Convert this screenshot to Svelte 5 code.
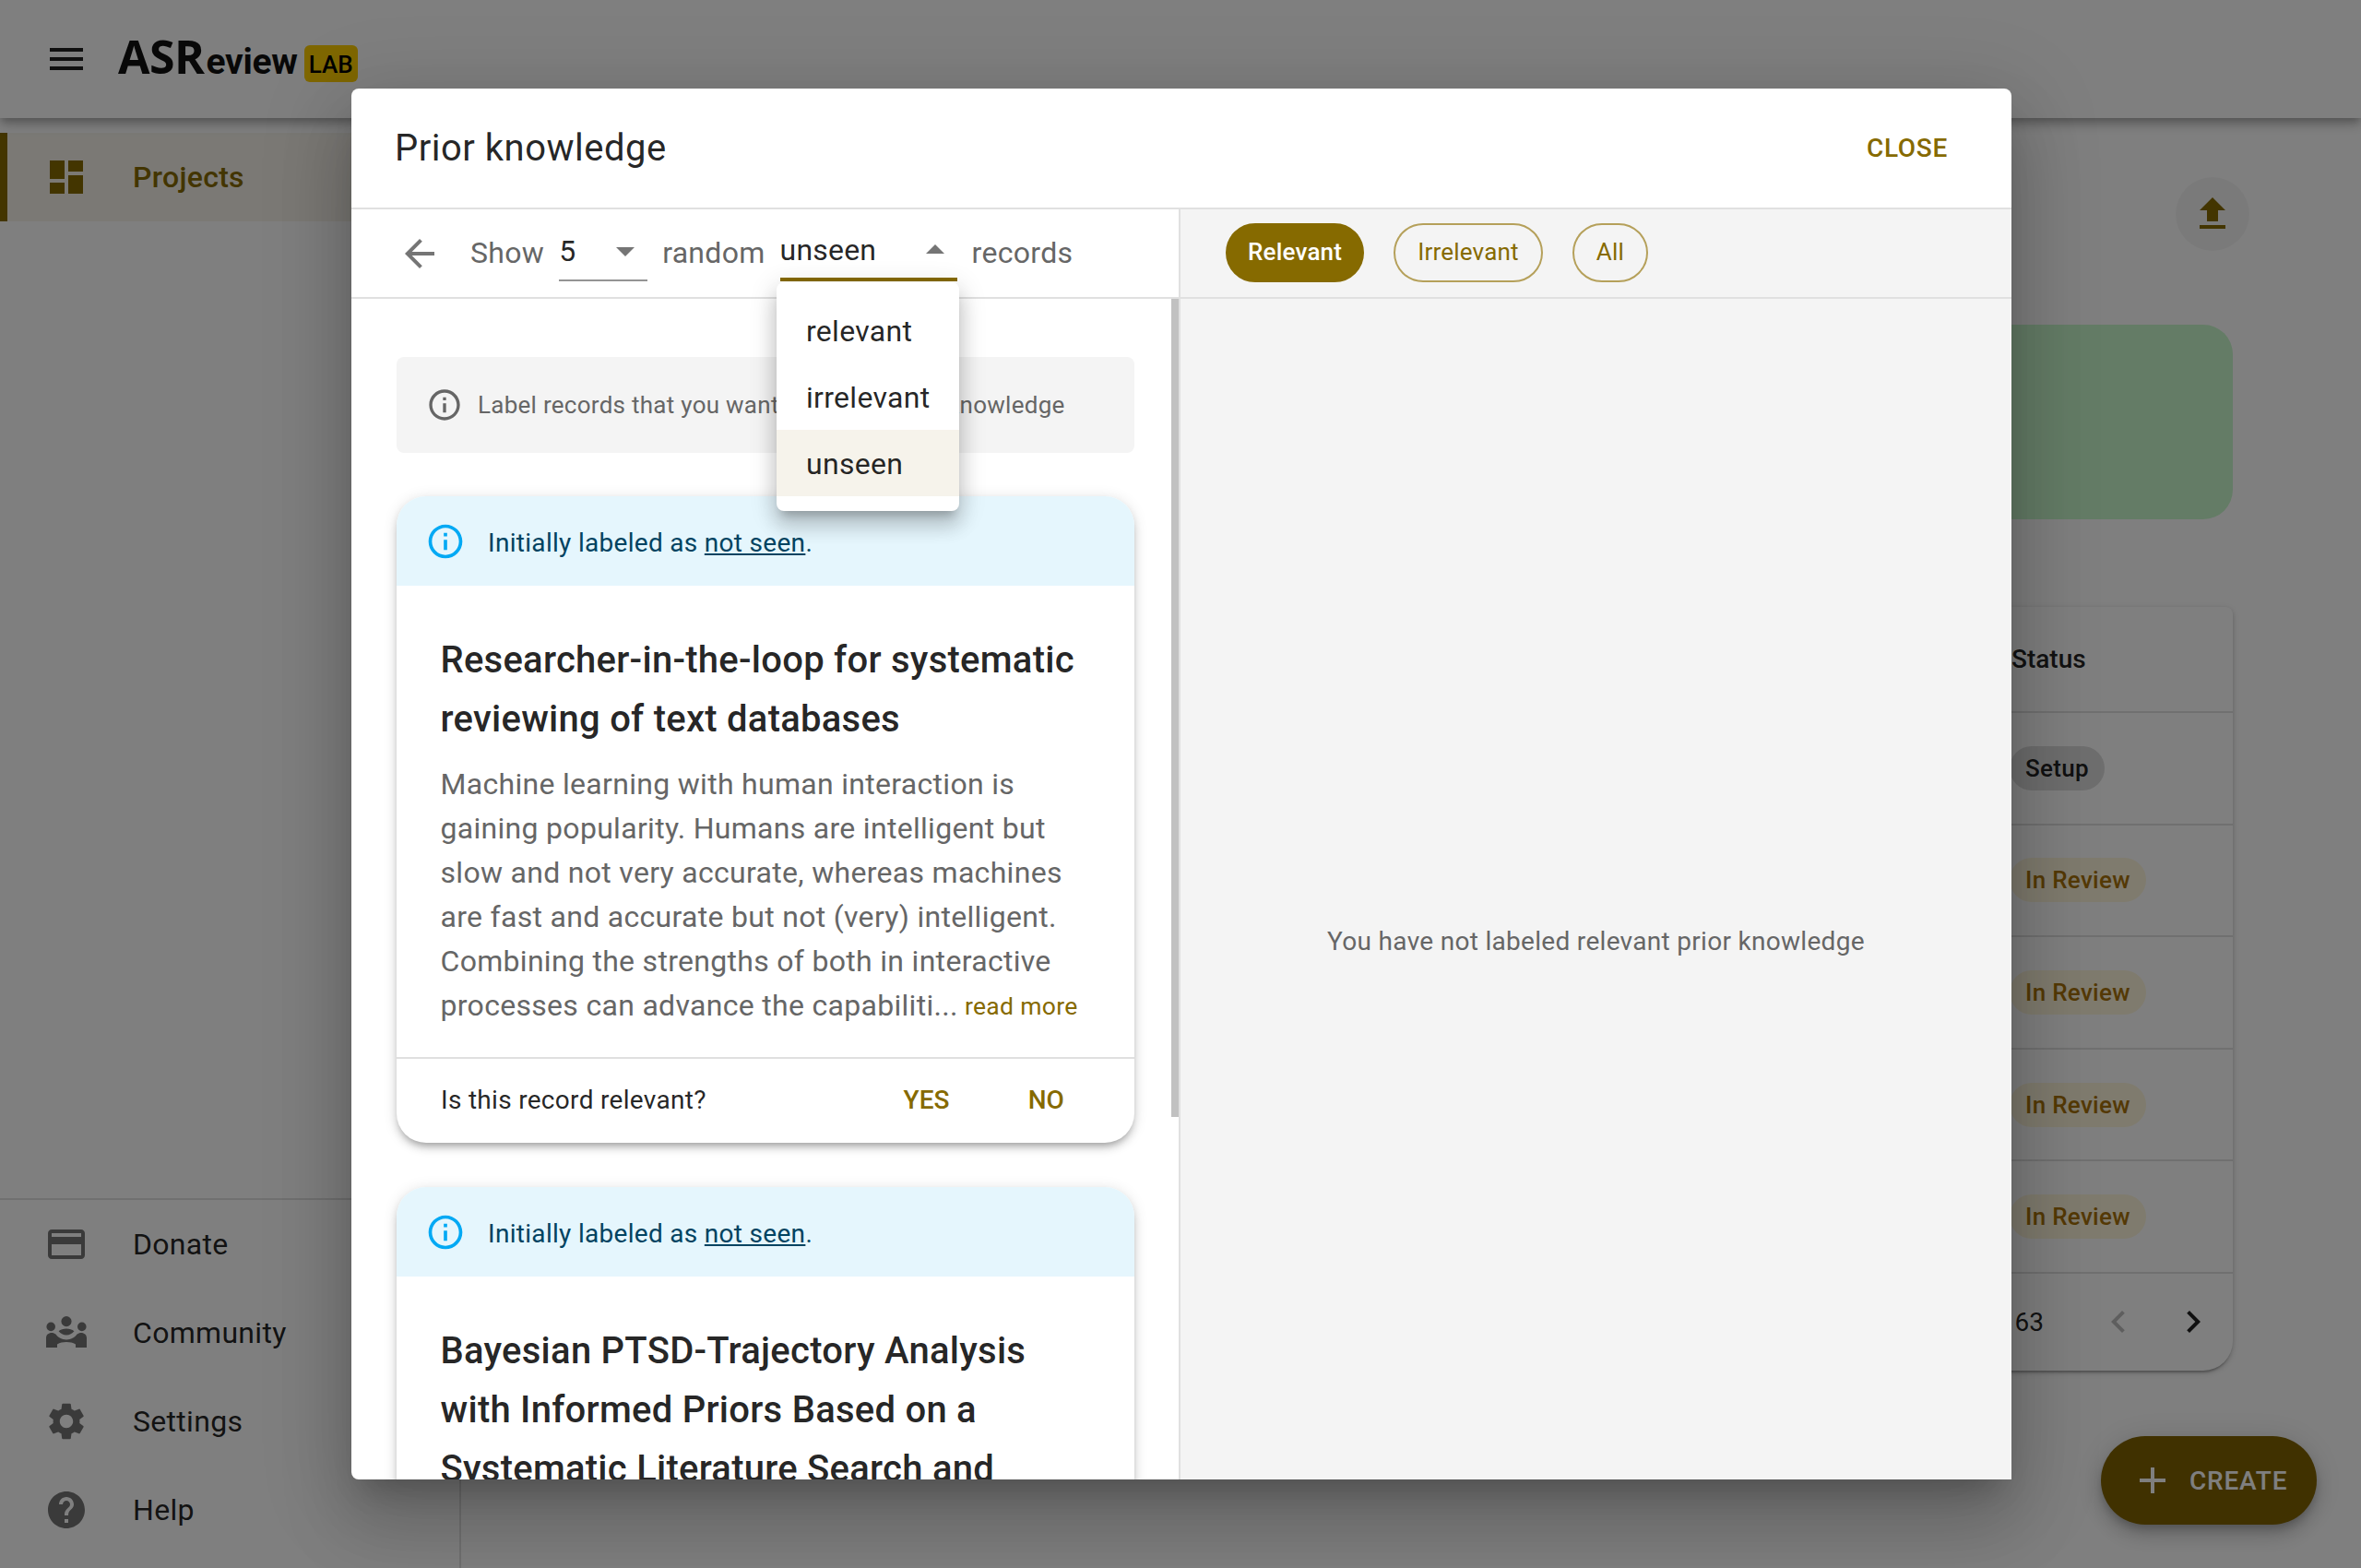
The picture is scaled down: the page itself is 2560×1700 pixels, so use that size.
<script>
  const P = {
    menu: 'M3 18h18v-2H3v2zm0-5h18v-2H3v2zm0-7v2h18V6H3z',
    dash: 'M3 13h8V3H3v10zm0 8h8v-6H3v6zm10 0h8V11h-8v10zm0-18v6h8V3h-8z',
    card: 'M20 4H4c-1.11 0-1.99.89-1.99 2L2 18c0 1.11.89 2 2 2h16c1.11 0 2-.89 2-2V6c0-1.11-.89-2-2-2zm0 14H4v-6h16v6zm0-10H4V6h16v2z',
    community: 'M3.6 6.300a2.400 2.400 0 1 1 0 4.800 2.400 2.400 0 0 1 0-4.800zm16.800 0a2.400 2.400 0 1 1 0 4.800 2.400 2.400 0 0 1 0-4.800zM12 3a2.800 2.800 0 1 1 0 5.600A2.800 2.800 0 0 1 12 3zM1 20v-5.200c0-1.700 1.300-2.800 3-2.800.9 0 1.600.3 2.200.8 1.300 1.800 3.400 2.900 5.800 2.900s4.500-1.100 5.800-2.900c.6-.5 1.300-.8 2.200-.8 1.700 0 3 1.100 3 2.800V20h-6v-1.800c-1.500-.8-3.100-1.200-5-1.200s-3.500.4-5 1.200V20zM7.800 11.100c1-.9 2.600-1.400 4.200-1.400s3.200.5 4.200 1.400c-1 1.300-2.500 2.100-4.200 2.100s-3.200-.8-4.200-2.100z',
    gear: 'M19.14 12.94c.04-.3.06-.61.06-.94 0-.32-.02-.64-.07-.94l2.03-1.58c.18-.14.23-.41.12-.61l-1.92-3.32c-.12-.22-.37-.29-.59-.22l-2.39.96c-.5-.38-1.03-.7-1.62-.94l-.36-2.54c-.04-.24-.24-.41-.48-.41h-3.84c-.24 0-.43.17-.47.41l-.36 2.54c-.59.24-1.13.57-1.62.94l-2.39-.96c-.22-.08-.47 0-.59.22L2.74 8.87c-.12.21-.08.47.12.61l2.03 1.58c-.05.3-.09.63-.09.94s.02.64.07.94l-2.03 1.58c-.18.14-.23.41-.12.61l1.92 3.32c.12.22.37.29.59.22l2.39-.96c.5.38 1.03.7 1.62.94l.36 2.54c.05.24.24.41.48.41h3.84c.24 0 .44-.17.47-.41l.36-2.54c.59-.24 1.13-.56 1.62-.94l2.39.96c.22.08.47 0 .59-.22l1.92-3.32c.12-.22.07-.47-.12-.61l-2.01-1.58zM12 15.6c-1.98 0-3.6-1.62-3.6-3.6s1.62-3.6 3.6-3.6 3.6 1.62 3.6 3.6-1.62 3.6-3.6 3.6z',
    help: 'M12 2C6.48 2 2 6.48 2 12s4.48 10 10 10 10-4.48 10-10S17.52 2 12 2zm1 17h-2v-2h2v2zm2.07-7.75l-.9.92C13.45 12.9 13 13.5 13 15h-2v-.5c0-1.1.45-2.1 1.17-2.83l1.24-1.26c.37-.36.59-.86.59-1.41 0-1.1-.9-2-2-2s-2 .9-2 2H8c0-2.21 1.79-4 4-4s4 1.79 4 4c0 .88-.36 1.68-.93 2.25z',
    upload: 'M9 16h6v-6h4l-7-7-7 7h4zm-4 2h14v2H5z',
    back: 'M20 11H7.83l5.59-5.59L12 4l-8 8 8 8 1.41-1.41L7.83 13H20v-2z',
    info: 'M11 7h2v2h-2zm0 4h2v6h-2zm1-9C6.48 2 2 6.48 2 12s4.48 10 10 10 10-4.48 10-10S17.52 2 12 2zm0 18c-4.41 0-8-3.59-8-8s3.59-8 8-8 8 3.59 8 8-3.59 8-8 8z',
    add: 'M19 13h-6v6h-2v-6H5v-2h6V5h2v6h6v2z',
    left: 'M15.41 7.41 14 6l-6 6 6 6 1.41-1.41L10.83 12z',
    right: 'M10 6 8.59 7.41 13.17 12l-4.58 4.59L10 18l6-6z',
    down: 'M7 10l5 5 5-5z',
    up: 'M7 14l5-5 5 5z'
  };
  const navBottom = [
    { label: 'Donate', icon: P.card },
    { label: 'Community', icon: P.community },
    { label: 'Settings', icon: P.gear },
    { label: 'Help', icon: P.help }
  ];
  const statuses = [
    { label: 'Setup', kind: 'setup' },
    { label: 'In Review', kind: 'review' },
    { label: 'In Review', kind: 'review' },
    { label: 'In Review', kind: 'review' },
    { label: 'In Review', kind: 'review' }
  ];
  const records = [
    {
      title: 'Researcher-in-the-loop for systematic reviewing of text databases',
      abstract: 'Machine learning with human interaction is gaining popularity. Humans are intelligent but slow and not very accurate, whereas machines are fast and accurate but not (very) intelligent. Combining the strengths of both in interactive processes can advance the capabiliti...'
    },
    {
      title: 'Bayesian PTSD-Trajectory Analysis with Informed Priors Based on a Systematic Literature Search and',
      abstract: ''
    }
  ];
</script>

{#snippet icon(d, cls)}
  <svg class={cls} viewBox="0 0 24 24" aria-hidden="true"><path {d} /></svg>
{/snippet}

<div class="page">
  <header class="appbar">
    {@render icon(P.menu, 'i48 dark')}
    <div class="logo">
      <span class="logo-big">ASR</span><span class="logo-small">eview</span><span class="logo-lab">LAB</span>
    </div>
  </header>

  <div class="layout">
    <aside class="sidebar">
      <nav class="nav-top">
        <div class="nav-item active">
          {@render icon(P.dash, 'i48 gold')}
          <span>Projects</span>
        </div>
      </nav>
      <nav class="nav-bottom">
        {#each navBottom as item}
          <div class="nav-item">
            {@render icon(item.icon, 'i48 muted')}
            <span>{item.label}</span>
          </div>
        {/each}
      </nav>
    </aside>

    <main class="main">
      <div class="actions">
        <div class="round-btn">{@render icon(P.upload, 'i48 gold')}</div>
      </div>
      <div class="green-card"></div>
      <section class="table">
        <div class="thead"><div class="cell status-head">Status</div></div>
        {#each statuses as s}
          <div class="trow">
            <div class="cell"><span class="pill {s.kind}">{s.label}</span></div>
          </div>
        {/each}
        <div class="tfoot">
          <span class="count">63</span>
          {@render icon(P.left, 'i48 disabled')}
          {@render icon(P.right, 'i48 dark')}
        </div>
      </section>
      <div class="fab">
        {@render icon(P.add, 'i48 white')}
        <span>CREATE</span>
      </div>
    </main>
  </div>

  <div class="backdrop"></div>

  <div class="dialog">
    <div class="dialog-head">
      <h2>Prior knowledge</h2>
      <span class="close">CLOSE</span>
    </div>
    <div class="dialog-body">
      <div class="col col-left">
        <div class="toolbar">
          {@render icon(P.back, 'i48 muted back')}
          <span class="lbl">Show</span>
          <div class="select s-num"><span>5</span>{@render icon(P.down, 'i48 muted')}</div>
          <span class="lbl">random</span>
          <div class="select s-kind"><span>unseen</span>{@render icon(P.up, 'i48 muted')}</div>
          <span class="lbl">records</span>
        </div>
        <div class="scroll">
          <div class="note">
            {@render icon(P.info, 'i40 grey')}
            <span>Label records that you want to use as prior knowledge</span>
          </div>
          {#each records as r}
            <article class="record">
              <div class="alert">
                {@render icon(P.info, 'i44 blue')}
                <span>Initially labeled as <u>not seen</u>.</span>
              </div>
              <div class="record-body">
                <h3>{r.title}</h3>
                {#if r.abstract}
                  <p>{r.abstract} <span class="more">read more</span></p>
                {/if}
              </div>
              {#if r.abstract}
                <div class="record-foot">
                  <span class="q">Is this record relevant?</span>
                  <span class="act yes">YES</span>
                  <span class="act no">NO</span>
                </div>
              {/if}
            </article>
          {/each}
          <div class="scrollbar"></div>
        </div>
      </div>
      <div class="col col-right">
        <div class="toolbar chips">
          <span class="chip on">Relevant</span>
          <span class="chip">Irrelevant</span>
          <span class="chip">All</span>
        </div>
        <div class="empty">You have not labeled relevant prior knowledge</div>
      </div>
    </div>
    <ul class="menu">
      <li>relevant</li>
      <li>irrelevant</li>
      <li class="sel">unseen</li>
    </ul>
  </div>
</div>

<style>
  :global(body) {
    margin: 0;
    font-family: Roboto, "Noto Sans", sans-serif;
    background: #fff;
  }
  svg { display: block; flex: none; fill: currentColor; }
  .i48 { width: 48px; height: 48px; }
  .i44 { width: 44px; height: 44px; }
  .i40 { width: 40px; height: 40px; }
  .dark { color: rgba(0,0,0,.87); }
  .muted { color: rgba(0,0,0,.54); }
  .disabled { color: rgba(0,0,0,.26); }
  .gold { color: #866a00; }
  .white { color: #fff; }
  .grey { color: #666; }
  .blue { color: #03a9f4; }

  .page {
    width: 2560px;
    height: 1700px;
    overflow: hidden;
    display: flex;
    flex-direction: column;
    position: relative;
    color: rgba(0,0,0,.87);
  }

  .appbar {
    height: 128px;
    flex: none;
    display: flex;
    align-items: center;
    padding-left: 48px;
    background: #fff;
    position: relative;
    z-index: 2;
    box-shadow: 0 4px 8px -2px rgba(0,0,0,.2), 0 8px 10px 0 rgba(0,0,0,.14), 0 2px 20px 0 rgba(0,0,0,.12);
  }
  .logo {
    margin-left: 32px;
    display: flex;
    align-items: baseline;
    color: #111;
    font-family: Roboto, sans-serif;
    font-weight: 700;
    position: relative;
    top: -3px;
  }
  .logo-big { font-family: "Open Sans", Roboto, sans-serif; font-size: 50px; letter-spacing: -.5px; }
  .logo-small { font-size: 39px; letter-spacing: -.3px; margin-left: 2px; }
  .logo-lab {
    margin-left: 7px;
    width: 58px;
    height: 40px;
    border-radius: 6px;
    background: #ffce00;
    color: #000;
    font-size: 26px;
    font-weight: 500;
    line-height: 42px;
    text-align: center;
    align-self: center;
    position: relative;
    top: 8px;
  }

  .layout { flex: 1; display: flex; min-height: 0; }

  .sidebar {
    width: 498px;
    flex: none;
    border-right: 2px solid #e0e0e0;
    display: flex;
    flex-direction: column;
    justify-content: space-between;
  }
  .nav-top { padding-top: 16px; }
  .nav-bottom { border-top: 2px solid #e0e0e0; padding-bottom: 15px; }
  .nav-item {
    height: 96px;
    display: flex;
    align-items: center;
    gap: 48px;
    padding-left: 48px;
    font-size: 32px;
    letter-spacing: .3px;
  }
  .nav-item.active {
    padding-left: 40px;
    border-left: 8px solid #866a00;
    background: rgba(134,106,0,.08);
    color: #866a00;
    font-weight: 500;
  }

  .main {
    flex: 1;
    min-width: 0;
    position: relative;
    padding: 64px 139px 0 140px;
    display: flex;
    flex-direction: column;
  }
  .actions { display: flex; justify-content: flex-end; margin-right: -18px; }
  .round-btn {
    width: 80px;
    height: 80px;
    border-radius: 50%;
    background: rgba(0,0,0,.04);
    display: flex;
    align-items: center;
    justify-content: center;
  }
  .green-card {
    margin-top: 80px;
    height: 211px;
    border-radius: 32px;
    background: #c9f9cd;
  }
  .table {
    margin-top: 95px;
    border-radius: 8px 8px 32px 32px;
    box-shadow: 0 4px 2px -2px rgba(0,0,0,.2), 0 2px 4px 0 rgba(0,0,0,.14), 0 2px 10px 0 rgba(0,0,0,.12);
    background: #fff;
  }
  .thead, .trow { display: flex; justify-content: flex-end; border-bottom: 2px solid #e0e0e0; }
  .thead { height: 113px; align-items: center; }
  .trow { height: 119.6px; align-items: center; }
  .cell { width: 242px; font-size: 28px; }
  .status-head { font-weight: 500; padding-left: 2px; box-sizing: border-box; }
  .pill {
    display: inline-block;
    height: 48px;
    line-height: 48px;
    padding: 0 17px;
    border-radius: 24px;
    font-weight: 500;
    font-size: 26px;
    letter-spacing: .3px;
  }
  .setup { background: #dcdcdc; }
  .review { background: #fff6dc; color: #a8730a; }
  .tfoot {
    height: 105px;
    display: flex;
    align-items: center;
    font-size: 28px;
    justify-content: flex-end;
    padding-right: 19px;
    gap: 33px;
  }
  .count { margin-right: 24px; }
  .fab {
    position: absolute;
    right: 48px;
    top: 1429px;
    width: 234px;
    height: 96px;
    border-radius: 48px;
    box-sizing: border-box;
    background: #806200;
    color: #fff;
    display: flex;
    align-items: center;
    gap: 16px;
    padding-left: 32px;
    font-size: 28px;
    font-weight: 500;
    letter-spacing: .8px;
    box-shadow: 0 6px 10px -2px rgba(0,0,0,.2), 0 12px 20px 0 rgba(0,0,0,.14), 0 2px 36px 0 rgba(0,0,0,.12);
  }

  .backdrop {
    position: absolute;
    inset: 0;
    background: rgba(0,0,0,.5);
    z-index: 5;
  }

  .dialog {
    position: absolute;
    left: 381px;
    top: 96px;
    width: 1800px;
    height: 1508px;
    z-index: 6;
    background: #fff;
    border-radius: 8px;
    display: flex;
    flex-direction: column;
    box-shadow: 0 22px 30px -14px rgba(0,0,0,.2), 0 48px 76px 6px rgba(0,0,0,.14), 0 18px 92px 16px rgba(0,0,0,.12);
  }
  .dialog-head {
    height: 129px;
    flex: none;
    display: flex;
    align-items: center;
    justify-content: space-between;
    padding: 0 69px 0 47px;
    border-bottom: 2px solid #e0e0e0;
  }
  h2 { margin: 0; font-size: 40px; font-weight: 400; letter-spacing: .5px; color: rgba(0,0,0,.87); }
  .close { color: #866a00; font-size: 28px; font-weight: 500; letter-spacing: .7px; }

  .dialog-body { flex: 1; min-height: 0; display: flex; }
  .col { display: flex; flex-direction: column; box-sizing: border-box; min-height: 0; }
  .col-left { width: 899px; border-right: 2px solid #e0e0e0; }
  .col-right { width: 901px; background: #f4f4f4; }

  .toolbar {
    height: 95px;
    flex: none;
    display: flex;
    align-items: center;
    border-bottom: 2px solid #e0e0e0;
    padding-left: 50px;
    gap: 16px;
    font-size: 32px;
  }
  .back { margin-right: 15px; }
  .lbl { color: #666; letter-spacing: .3px; position: relative; top: -1px; }
  .select {
    display: flex;
    align-items: center;
    justify-content: space-between;
    align-self: flex-end;
    height: 58px;
    margin-bottom: 17px;
    padding-bottom: 6px;
    box-sizing: border-box;
    color: rgba(0,0,0,.87);
  }
  .s-num { width: 96px; border-bottom: 2px solid #949494; }
  .s-kind { width: 192px; border-bottom: 4px solid #866a00; }
  .s-kind span { letter-spacing: .2px; }

  .scroll {
    flex: 1;
    min-height: 0;
    overflow: hidden;
    position: relative;
    padding: 63px 48px 0 49px;
    display: flex;
    flex-direction: column;
    gap: 48px;
  }
  .note {
    flex: none;
    height: 104px;
    border-radius: 8px;
    background: #f4f4f4;
    display: flex;
    align-items: center;
    gap: 16px;
    padding-left: 32px;
    color: #666;
    font-size: 26px;
    letter-spacing: .27px;
    margin-bottom: -1px;
  }
  .record {
    flex: none;
    border-radius: 32px;
    overflow: hidden;
    background: #fff;
    box-shadow: 0 6px 6px -4px rgba(0,0,0,.2), 0 6px 8px 0 rgba(0,0,0,.14), 0 2px 16px 0 rgba(0,0,0,.12);
  }
  .alert {
    height: 97px;
    background: #e5f6fd;
    color: #014361;
    display: flex;
    align-items: center;
    gap: 24px;
    padding-left: 31px;
    font-size: 28px;
    letter-spacing: .3px;
  }
  .alert span { padding-top: 3px; }
  .record-body { padding: 49px 48px 30px 47.5px; }
  h3 { margin: 0; font-size: 40px; line-height: 64px; font-weight: 500; letter-spacing: .25px; color: rgba(0,0,0,.87); }
  p { margin: 14px 0 0; font-size: 32px; line-height: 48px; letter-spacing: .3px; color: #666; }
  .more { color: #866a00; font-size: 26.5px; letter-spacing: .3px; margin-left: -1px; position: relative; top: -1px; }
  .record-foot {
    height: 93px;
    box-sizing: border-box;
    border-top: 2px solid #e0e0e0;
    display: flex;
    align-items: center;
    padding: 0 0 2px 48px;
    font-size: 28px;
    letter-spacing: .3px;
  }
  .q { margin-right: auto; }
  .act { color: #866a00; font-weight: 500; letter-spacing: .1px; }
  .yes { margin-right: 85px; }
  .no { margin-right: 76px; }
  .scrollbar {
    position: absolute;
    right: 0;
    top: 0;
    width: 8px;
    height: 887px;
    background: #c1c1c1;
  }

  .chips { padding-left: 49px; gap: 32px; padding-bottom: 2px; height: 93px; }
  .chip {
    height: 64px;
    box-sizing: border-box;
    display: flex;
    align-items: center;
    padding: 0 24px 1px;
    border-radius: 32px;
    border: 2px solid #b5a05a;
    color: #866a00;
    font-size: 26px;
    letter-spacing: .2px;
  }
  .chip.on { background: #866a00; border-color: #866a00; color: #fff; font-weight: 500; padding: 0 22px 1px; }
  .empty {
    flex: 1;
    display: flex;
    justify-content: center;
    align-items: center;
    padding-top: 112px;
    color: #666;
    font-size: 28px;
    letter-spacing: .3px;
  }

  .menu {
    position: absolute;
    left: 461px;
    top: 210px;
    width: 198px;
    margin: 0;
    padding: 16px 0;
    list-style: none;
    background: #fff;
    border-radius: 8px;
    font-size: 32px;
    letter-spacing: .3px;
    box-shadow: 0 10px 10px -6px rgba(0,0,0,.2), 0 16px 20px 2px rgba(0,0,0,.14), 0 6px 28px 4px rgba(0,0,0,.12);
  }
  .menu li { height: 72px; line-height: 75px; padding-left: 32px; }
  .menu .sel { background: rgba(134,106,0,.08); }
</style>
